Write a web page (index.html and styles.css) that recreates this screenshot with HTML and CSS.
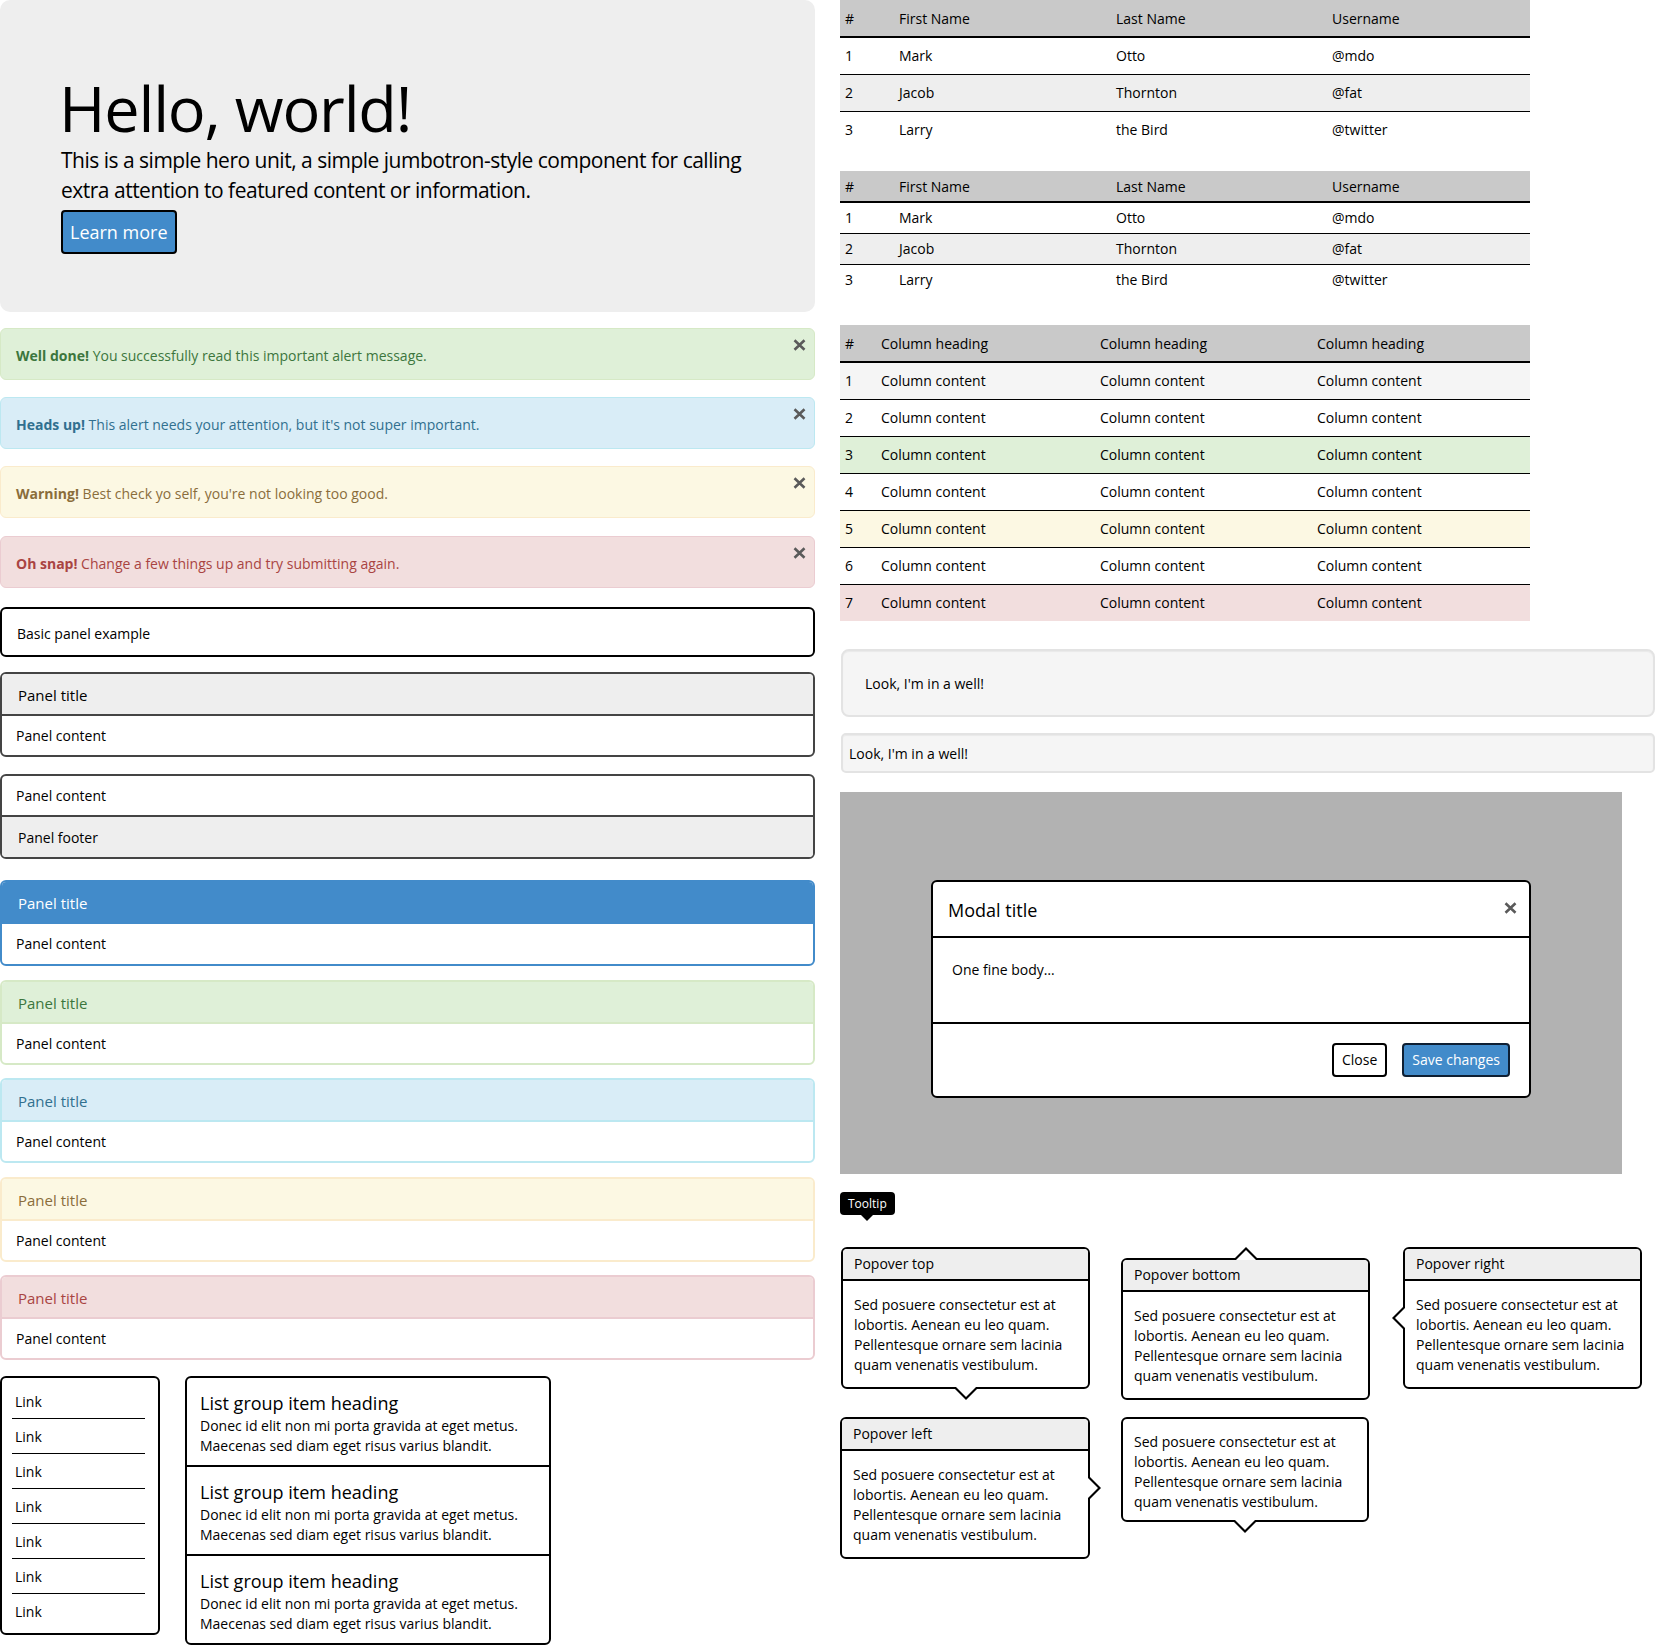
FILE: index.html
```html
<!DOCTYPE html>
<html lang="en">
<head>
<meta charset="utf-8">
<title>Theme</title>
<link rel="stylesheet" href="styles.css">
</head>
<body>
<div class="page">
  <div class="col col-left">
    <div class="jumbotron">
      <h1>Hello, world!</h1>
      <p>This is a simple hero unit, a simple jumbotron-style component for calling<br>extra attention to featured content or information.</p>
      <a class="btn btn-primary btn-lg" href="#">Learn more</a>
    </div>

    <div class="alert alert-success first"><span><strong>Well done!</strong> You successfully read this important alert message.</span><svg class="close-x" viewBox="0 0 13 12"><path d="M1.5 1.3L11.5 10.7M11.5 1.3L1.5 10.7"/></svg></div>
    <div class="alert alert-info"><span><strong>Heads up!</strong> This alert needs your attention, but it's not super important.</span><svg class="close-x" viewBox="0 0 13 12"><path d="M1.5 1.3L11.5 10.7M11.5 1.3L1.5 10.7"/></svg></div>
    <div class="alert alert-warning"><span><strong>Warning!</strong> Best check yo self, you're not looking too good.</span><svg class="close-x" viewBox="0 0 13 12"><path d="M1.5 1.3L11.5 10.7M11.5 1.3L1.5 10.7"/></svg></div>
    <div class="alert alert-danger last"><span><strong>Oh snap!</strong> Change a few things up and try submitting again.</span><svg class="close-x" viewBox="0 0 13 12"><path d="M1.5 1.3L11.5 10.7M11.5 1.3L1.5 10.7"/></svg></div>

    <div class="panel panel-basic mt-19"><div class="panel-body basic">Basic panel example</div></div>
    <div class="panel panel-default mt-15"><div class="panel-heading"><h3 class="panel-title">Panel title</h3></div><div class="panel-body">Panel content</div></div>
    <div class="panel panel-default mt-17"><div class="panel-body">Panel content</div><div class="panel-footer">Panel footer</div></div>
    <div class="panel panel-primary mt-21"><div class="panel-heading"><h3 class="panel-title">Panel title</h3></div><div class="panel-body">Panel content</div></div>
    <div class="panel panel-success mt-14"><div class="panel-heading"><h3 class="panel-title">Panel title</h3></div><div class="panel-body">Panel content</div></div>
    <div class="panel panel-info mt-13"><div class="panel-heading"><h3 class="panel-title">Panel title</h3></div><div class="panel-body">Panel content</div></div>
    <div class="panel panel-warning mt-14"><div class="panel-heading"><h3 class="panel-title">Panel title</h3></div><div class="panel-body">Panel content</div></div>
    <div class="panel panel-danger mt-13"><div class="panel-heading"><h3 class="panel-title">Panel title</h3></div><div class="panel-body">Panel content</div></div>

    <div class="lists">
      <ul class="nav-list">
        <li><a href="#">Link</a></li>
        <li><a href="#">Link</a></li>
        <li><a href="#">Link</a></li>
        <li><a href="#">Link</a></li>
        <li><a href="#">Link</a></li>
        <li><a href="#">Link</a></li>
        <li><a href="#">Link</a></li>
      </ul>
      <div class="list-group">
        <a class="list-group-item" href="#">
          <h4 class="list-group-item-heading">List group item heading</h4>
          <p class="list-group-item-text">Donec id elit non mi porta gravida at eget metus.<br>Maecenas sed diam eget risus varius blandit.</p>
        </a>
        <a class="list-group-item" href="#">
          <h4 class="list-group-item-heading">List group item heading</h4>
          <p class="list-group-item-text">Donec id elit non mi porta gravida at eget metus.<br>Maecenas sed diam eget risus varius blandit.</p>
        </a>
        <a class="list-group-item" href="#">
          <h4 class="list-group-item-heading">List group item heading</h4>
          <p class="list-group-item-text">Donec id elit non mi porta gravida at eget metus.<br>Maecenas sed diam eget risus varius blandit.</p>
        </a>
      </div>
    </div>
  </div>

  <div class="col col-right">
    <table class="table table-striped table-one">
      <colgroup><col class="c-n1"><col class="c-first"><col class="c-last"><col class="c-user"></colgroup>
      <thead><tr><th>#</th><th>First Name</th><th>Last Name</th><th>Username</th></tr></thead>
      <tbody>
        <tr><td>1</td><td>Mark</td><td>Otto</td><td>@mdo</td></tr>
        <tr><td>2</td><td>Jacob</td><td>Thornton</td><td>@fat</td></tr>
        <tr><td>3</td><td>Larry</td><td>the Bird</td><td>@twitter</td></tr>
      </tbody>
    </table>

    <table class="table table-striped table-condensed table-two">
      <colgroup><col class="c-n1"><col class="c-first"><col class="c-last"><col class="c-user"></colgroup>
      <thead><tr><th>#</th><th>First Name</th><th>Last Name</th><th>Username</th></tr></thead>
      <tbody>
        <tr><td>1</td><td>Mark</td><td>Otto</td><td>@mdo</td></tr>
        <tr><td>2</td><td>Jacob</td><td>Thornton</td><td>@fat</td></tr>
        <tr><td>3</td><td>Larry</td><td>the Bird</td><td>@twitter</td></tr>
      </tbody>
    </table>

    <table class="table">
      <colgroup><col class="c-n3"><col class="c-h1"><col class="c-h2"><col class="c-h3"></colgroup>
      <thead><tr><th>#</th><th>Column heading</th><th>Column heading</th><th>Column heading</th></tr></thead>
      <tbody>
        <tr class="active"><td>1</td><td>Column content</td><td>Column content</td><td>Column content</td></tr>
        <tr><td>2</td><td>Column content</td><td>Column content</td><td>Column content</td></tr>
        <tr class="success"><td>3</td><td>Column content</td><td>Column content</td><td>Column content</td></tr>
        <tr><td>4</td><td>Column content</td><td>Column content</td><td>Column content</td></tr>
        <tr class="warning"><td>5</td><td>Column content</td><td>Column content</td><td>Column content</td></tr>
        <tr><td>6</td><td>Column content</td><td>Column content</td><td>Column content</td></tr>
        <tr class="danger"><td>7</td><td>Column content</td><td>Column content</td><td>Column content</td></tr>
      </tbody>
    </table>

    <div class="well well-lg">Look, I'm in a well!</div>
    <div class="well well-sm">Look, I'm in a well!</div>

    <div class="modal-demo">
      <div class="modal">
        <div class="modal-header">
          <h4 class="modal-title">Modal title</h4>
          <svg class="close-x modal-close" viewBox="0 0 13 12"><path d="M1.5 1.3L11.5 10.7M11.5 1.3L1.5 10.7"/></svg>
        </div>
        <div class="modal-body">One fine body…</div>
        <div class="modal-footer">
          <button class="btn" type="button">Close</button>
          <button class="btn btn-primary" type="button">Save changes</button>
        </div>
      </div>
    </div>

    <div class="tooltip-row"><div class="tooltip">Tooltip</div></div>

    <div class="pop-row row-one">
      <div class="popover arrow-bottom pop-a">
        <h3 class="popover-title">Popover top</h3>
        <div class="popover-content">Sed posuere consectetur est at<br>lobortis. Aenean eu leo quam.<br>Pellentesque ornare sem lacinia<br>quam venenatis vestibulum.</div>
      </div>
      <div class="popover arrow-top pop-b">
        <h3 class="popover-title">Popover bottom</h3>
        <div class="popover-content">Sed posuere consectetur est at<br>lobortis. Aenean eu leo quam.<br>Pellentesque ornare sem lacinia<br>quam venenatis vestibulum.</div>
      </div>
      <div class="popover arrow-left pop-c">
        <h3 class="popover-title">Popover right</h3>
        <div class="popover-content">Sed posuere consectetur est at<br>lobortis. Aenean eu leo quam.<br>Pellentesque ornare sem lacinia<br>quam venenatis vestibulum.</div>
      </div>
    </div>
    <div class="pop-row row-two">
      <div class="popover arrow-right pop-d">
        <h3 class="popover-title">Popover left</h3>
        <div class="popover-content">Sed posuere consectetur est at<br>lobortis. Aenean eu leo quam.<br>Pellentesque ornare sem lacinia<br>quam venenatis vestibulum.</div>
      </div>
      <div class="popover arrow-bottom no-title pop-e">
        <div class="popover-content">Sed posuere consectetur est at<br>lobortis. Aenean eu leo quam.<br>Pellentesque ornare sem lacinia<br>quam venenatis vestibulum.</div>
      </div>
    </div>
  </div>
</div>
</body>
</html>
```

FILE: styles.css
```css
* { box-sizing: border-box; }
html, body { margin: 0; padding: 0; background: #fff; }
body {
  font-family: "Open Sans", "Noto Sans", sans-serif;
  font-size: 14px;
  line-height: 20px;
  color: #000;
}
a { color: inherit; text-decoration: none; }

.page { display: flex; align-items: flex-start; gap: 25px; width: 1656px; }
.col { flex: none; }
.col-left { width: 815px; }
.col-right { width: 816px; }

/* Jumbotron */
.jumbotron {
  background: #eee;
  border-radius: 10px;
  padding: 73px 20px 58px 61px;
  display: flex;
  flex-direction: column;
  align-items: flex-start;
}
.jumbotron h1 {
  font-size: 63px;
  line-height: 70px;
  font-weight: 400;
  margin: 0 0 2px -2px;
  letter-spacing: -1.2px;
}
.jumbotron p { font-size: 21px; line-height: 30px; margin: 0 0 5px; letter-spacing: -0.5px; }

/* Buttons */
.btn {
  display: inline-block;
  font-family: inherit;
  font-size: 14px;
  line-height: 20px;
  padding: 5px 8px;
  border: 2px solid #000;
  border-radius: 4px;
  background: #fff;
  color: #000;
  cursor: pointer;
}
.btn-primary { background: #428bca; color: #fff; border-color: #0e1f33; }
.btn-lg { font-size: 18px; line-height: 25px; padding: 8px 7px 7px; border-color: #000; }

/* Close icon */
.close-x {
  display: block;
  flex: none;
  width: 13px;
  height: 12px;
  fill: none;
  stroke: #5a5a5a;
  stroke-width: 2.6;
}

/* Alerts */
.alert {
  display: flex;
  justify-content: space-between;
  align-items: flex-start;
  margin-top: 17px;
  padding: 17px 8px 13px 15px;
  border: 1px solid;
  border-radius: 6px;
}
.alert.first { margin-top: 16px; }
.alert.last { margin-top: 18px; }
.alert strong { font-weight: 700; }
.alert .close-x { margin-top: -7px; }
.alert-success { background: #dff0d8; border-color: #d6e9c6; color: #3c763d; }
.alert-info { background: #d9edf7; border-color: #bce8f1; color: #31708f; }
.alert-warning { background: #fcf8e3; border-color: #faebcc; color: #8a6d3b; }
.alert-danger { background: #f2dede; border-color: #ebccd1; color: #a94442; }

/* Panels */
.panel { border: 2px solid #444; border-radius: 6px; background: #fff; overflow: hidden; }
.mt-13 { margin-top: 13px; }
.mt-14 { margin-top: 14px; }
.mt-15 { margin-top: 15px; }
.mt-17 { margin-top: 17px; }
.mt-19 { margin-top: 19px; }
.mt-21 { margin-top: 21px; }
.panel-basic { border-color: #000; }
.panel-body { padding: 10px 14px 9px; }
.panel-body.basic { padding: 15px 15px 11px; }
.panel-heading { padding: 11px 16px 9px; border-bottom: 2px solid #444; background: #eee; }
.panel-title { margin: 0; font-size: 15px; line-height: 20px; font-weight: 400; }
.panel-footer { padding: 11px 16px 9px; border-top: 2px solid #444; background: #eee; }
.panel-primary { border-color: #428bca; }
.panel-primary .panel-heading { background: #428bca; border-color: #428bca; color: #fff; }
.panel-primary .panel-body { padding-bottom: 10px; }
.panel-success { border-color: #d6e9c6; }
.panel-success .panel-heading { background: #dff0d8; border-color: #d6e9c6; color: #3c763d; }
.panel-info { border-color: #bce8f1; }
.panel-info .panel-heading { background: #d9edf7; border-color: #bce8f1; color: #31708f; }
.panel-warning { border-color: #faebcc; }
.panel-warning .panel-heading { background: #fcf8e3; border-color: #faebcc; color: #8a6d3b; }
.panel-danger { border-color: #ebccd1; }
.panel-danger .panel-heading { background: #f2dede; border-color: #ebccd1; color: #a94442; }

/* Lists */
.lists { display: flex; align-items: flex-start; gap: 25px; margin-top: 16px; }
.nav-list {
  width: 160px;
  margin: 0;
  padding: 6px 13px 5px 10px;
  list-style: none;
  border: 2px solid #000;
  border-radius: 6px;
}
.nav-list li { padding: 8px 3px 6px; border-bottom: 1px solid #000; }
.nav-list li:last-child { border-bottom: 0; }

.list-group { width: 366px; border: 2px solid #000; border-radius: 6px; }
.list-group-item { display: block; padding: 15px 12px 9px 13px; }
.list-group-item + .list-group-item { border-top: 2px solid #000; }
.list-group-item-heading { margin: 0 0 3px; font-size: 18px; line-height: 20px; font-weight: 400; }
.list-group-item-text { margin: 0; white-space: nowrap; }

/* Tables */
.table { width: 690px; border-collapse: collapse; table-layout: fixed; }
.table-one { margin-bottom: 23px; }
.table-two { margin-bottom: 30px; }
.c-n1 { width: 54px; }
.c-first { width: 217px; }
.c-last { width: 216px; }
.c-user { width: 203px; }
.c-n3 { width: 36px; }
.c-h1 { width: 219px; }
.c-h2 { width: 217px; }
.c-h3 { width: 218px; }
.table th, .table td { padding: 8px 5px; text-align: left; vertical-align: top; font-weight: 400; }
.table thead th { background: #c9c9c9; border-bottom: 2px solid #000; padding-top: 9px; padding-bottom: 7px; }
.table tbody td { border-top: 1px solid #000; }
.table-condensed td { padding: 5px 5px; }
.table-condensed thead th { padding: 6px 5px 4px; }
.table-striped tbody tr:nth-child(even) td { background: #eee; }
.table tr.active td { background: #f5f5f5; }
.table tr.success td { background: #dff0d8; }
.table tr.warning td { background: #fcf8e3; }
.table tr.danger td { background: #f2dede; }

/* Wells */
.well {
  width: 814px;
  margin-left: 1px;
  background: #f5f5f5;
  border: 2px solid #e3e3e3;
  box-shadow: inset 0 1px 1px rgba(0,0,0,.05);
}
.well-lg { margin-top: 28px; padding: 23px 22px 21px; border-radius: 8px; }
.well-sm { margin-top: 16px; padding: 9px 6px 7px; border-radius: 5px; }

/* Modal */
.modal-demo { margin-top: 19px; width: 782px; background: #b2b2b2; padding: 88px 0 76px; }
.modal { width: 600px; margin: 0 auto; background: #fff; border: 2px solid #000; border-radius: 6px; }
.modal-header {
  display: flex;
  justify-content: space-between;
  align-items: flex-start;
  padding: 16px 12px 14px 15px;
  border-bottom: 2px solid #000;
}
.modal-title { margin: 0; font-size: 18px; line-height: 24px; font-weight: 400; }
.modal-close { margin-top: 4px; }
.modal-body { padding: 22px 19px 42px; }
.modal-footer {
  display: flex;
  justify-content: flex-end;
  gap: 15px;
  padding: 19px 19px;
  border-top: 2px solid #000;
}

/* Tooltip */
.tooltip-row { display: flex; margin-top: 18px; }
.tooltip {
  position: relative;
  background: #000;
  color: #fff;
  font-size: 12px;
  line-height: 17px;
  padding: 3px 8px;
  border-radius: 4px;
}
.tooltip::after {
  content: "";
  position: absolute;
  top: 100%;
  left: 50%;
  margin-left: -6px;
  border-style: solid;
  border-width: 6px 6px 0;
  border-color: #000 transparent transparent;
}

/* Popovers */
.pop-row { display: flex; align-items: flex-start; }
.row-one { margin-top: 32px; }
.row-two { margin-top: 17px; }
.popover {
  position: relative;
  flex: none;
  width: 250px;
  background: #fff;
  border: 2px solid #000;
  border-radius: 6px;
}
.pop-a { margin-left: 1px; width: 249px; }
.pop-b { margin-left: 31px; margin-top: 11px; width: 249px; }
.pop-c { margin-left: 33px; width: 239px; }
.pop-e { margin-left: 31px; width: 248px; }
.popover-title {
  margin: 0;
  padding: 5px 11px;
  background: #eee;
  border-bottom: 2px solid #000;
  border-radius: 4px 4px 0 0;
  font-size: 14px;
  line-height: 20px;
  font-weight: 400;
}
.popover-content { padding: 14px 11px 12px; white-space: nowrap; }
.no-title .popover-content { padding: 13px 11px 8px; }
.popover::before, .popover::after {
  content: "";
  position: absolute;
  width: 0;
  height: 0;
  border-style: solid;
  border-color: transparent;
}
.arrow-bottom::before { top: calc(100% + 2px); left: 50%; margin-left: -11px; border-width: 11px 11px 0; border-top-color: #000; }
.arrow-bottom::after { top: 100%; left: 50%; margin-left: -10px; border-width: 10px 10px 0; border-top-color: #fff; }
.arrow-top::before { bottom: calc(100% + 2px); left: 50%; margin-left: -11px; border-width: 0 11px 11px; border-bottom-color: #000; }
.arrow-top::after { bottom: 100%; left: 50%; margin-left: -10px; border-width: 0 10px 10px; border-bottom-color: #fff; }
.arrow-left::before { right: calc(100% + 2px); top: 50%; margin-top: -11px; border-width: 11px 11px 11px 0; border-right-color: #000; }
.arrow-left::after { right: 100%; top: 50%; margin-top: -10px; border-width: 10px 10px 10px 0; border-right-color: #fff; }
.arrow-right::before { left: calc(100% + 2px); top: 50%; margin-top: -11px; border-width: 11px 0 11px 11px; border-left-color: #000; }
.arrow-right::after { left: 100%; top: 50%; margin-top: -10px; border-width: 10px 0 10px 10px; border-left-color: #fff; }
```
